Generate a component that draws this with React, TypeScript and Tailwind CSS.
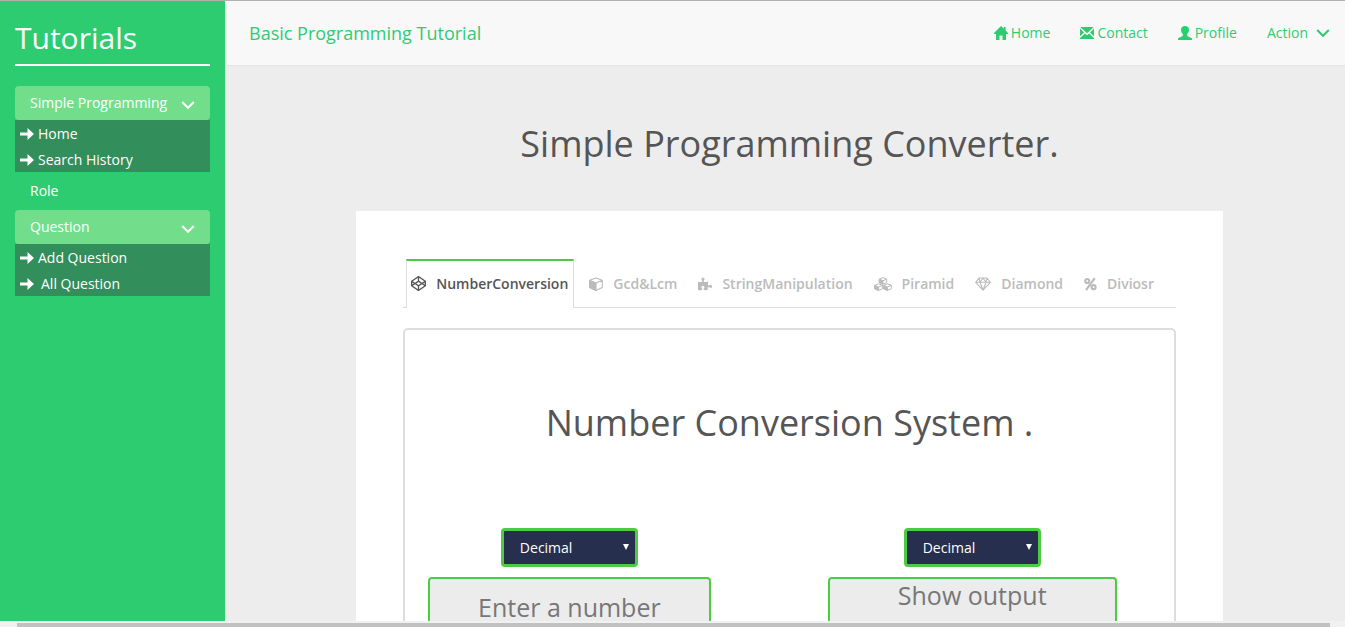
import type { ReactNode } from "react";
import { FaCodepen, FaPuzzlePiece } from "react-icons/fa";

type IconProps = { className?: string };

function HomeIcon({ className }: IconProps) {
  return (
    <svg viewBox="0 0 14 14" className={className} fill="currentColor" aria-hidden="true">
      <path d="M7 0 L9.8 2.8 V1 H11.6 V4.5 L14.2 7.2 V8 H12 V14 H8.5 V9.5 H5.5 V14 H2 V8 H-0.2 V7.2 Z" />
    </svg>
  );
}

function EnvelopeIcon({ className }: IconProps) {
  return (
    <svg viewBox="0 0 14 14" className={className} fill="currentColor" aria-hidden="true">
      <path d="M0.2 1 H13.8 L7 7.2 Z M0 2.6 L4 6.4 L0 10.2 Z M14 2.6 V10.2 L10 6.4 Z M5 7.4 L7 9.2 L9 7.4 L14 12 V13 H0 V12 Z" />
    </svg>
  );
}

function UserIcon({ className }: IconProps) {
  return (
    <svg viewBox="0 0 14 14" className={className} fill="currentColor" aria-hidden="true">
      <path d="M7 0 C9.5 0 11 1.4 11 3.8 C11 5.6 10.2 7 9.2 8 V9.4 C9.2 10 9.6 10.3 10.3 10.6 L13 11.7 C13.7 12 14 12.5 14 13.1 V14 H0 V13.1 C0 12.5 0.3 12 1 11.7 L3.7 10.6 C4.4 10.3 4.8 10 4.8 9.4 V8 C3.8 7 3 5.6 3 3.8 C3 1.4 4.5 0 7 0 Z" />
    </svg>
  );
}

function ChevronIcon({ className }: IconProps) {
  return (
    <svg viewBox="0 0 14 14" className={className} fill="none" stroke="currentColor" strokeWidth="2" aria-hidden="true">
      <path d="M1.2 4 L7 9.8 L12.8 4" />
    </svg>
  );
}

function ArrowIcon({ className }: IconProps) {
  return (
    <svg viewBox="0 0 14 14" className={className} fill="currentColor" aria-hidden="true">
      <path d="M7.5 1 L14 7 L7.5 13 V8.6 H0 V5.4 H7.5 Z" />
    </svg>
  );
}

function CubeIcon({ className }: IconProps) {
  return (
    <svg viewBox="0 0 14 14" className={className} stroke="currentColor" strokeWidth="1.1" strokeLinejoin="round" fill="none" aria-hidden="true">
      <path d="M7 0.9 L13.3 3.3 V10.4 L7 13.4 L0.7 10.4 V3.3 Z M7 6 L13.3 3.3" />
      <path fill="currentColor" d="M0.7 3.3 L7 6 V13.4 L0.7 10.4 Z" />
    </svg>
  );
}

function CubesIcon({ className }: IconProps) {
  return (
    <svg viewBox="0 0 18 14" className={className} stroke="currentColor" strokeWidth="1" strokeLinejoin="round" fill="none" aria-hidden="true">
      <path d="M9 0.6 L12.7 2.1 V5.6 L9 7.2 L5.3 5.6 V2.1 Z M9 3.8 L12.7 2.1" />
      <path fill="currentColor" d="M5.3 2.1 L9 3.8 V7.2 L5.3 5.6 Z" />
      <path d="M4.6 6.8 L8.4 8.3 V11.8 L4.6 13.4 L0.7 11.8 V8.3 Z M4.6 10 L8.4 8.3" />
      <path fill="currentColor" d="M0.7 8.3 L4.6 10 V13.4 L0.7 11.8 Z" />
      <path d="M13.4 6.8 L17.3 8.3 V11.8 L13.4 13.4 L9.6 11.8 V8.3 Z M13.4 10 L17.3 8.3" />
      <path fill="currentColor" d="M9.6 8.3 L13.4 10 V13.4 L9.6 11.8 Z" />
    </svg>
  );
}

function DiamondIcon({ className }: IconProps) {
  return (
    <svg viewBox="0 0 16 14" className={className} fill="none" stroke="currentColor" strokeWidth="1.1" strokeLinejoin="round" aria-hidden="true">
      <path d="M4 1 H12 L15.3 5.3 L8 13.2 L0.7 5.3 Z M0.7 5.3 H15.3 M5 5.3 L8 13.2 L11 5.3 M4 1 L5 5.3 L8 1 L11 5.3 L12 1" />
    </svg>
  );
}

function PercentIcon({ className }: IconProps) {
  return (
    <svg viewBox="0 0 13 14" className={className} fill="none" stroke="currentColor" strokeWidth="2.2" aria-hidden="true">
      <circle cx="3.2" cy="4" r="2" />
      <circle cx="9.6" cy="10.2" r="2" />
      <path d="M10.8 1.2 L2 13" />
    </svg>
  );
}

function MenuGroup({ title, children }: { title: string; children: ReactNode }) {
  return (
    <li>
      <button type="button" className="flex h-[34px] w-full items-center justify-between rounded bg-[#72de8c] pr-[15px] pl-[15px] text-left">
        {title}
        <ChevronIcon className="mt-1 size-[14px]" />
      </button>
      <ul className="bg-[#328e5a]">{children}</ul>
    </li>
  );
}

function MenuLink({ label, wide }: { label: string; wide?: boolean }) {
  return (
    <li>
      <a href="#" className={`flex h-[26px] items-center pt-[2px] pl-[5px] ${wide ? "gap-[7px]" : "gap-1"}`}>
        <ArrowIcon className="size-[14px]" />
        {label}
      </a>
    </li>
  );
}

function Sidebar() {
  return (
    <aside className="w-[225px] shrink-0 bg-[#2ecc71] px-[15px] pt-[18px] text-sm text-white">
      <h2 className="border-b-2 border-white pb-[7px] text-[30px] leading-[38px]">Tutorials</h2>
      <ul className="pt-5">
        <MenuGroup title="Simple Programming">
          <MenuLink label="Home" />
          <MenuLink label="Search History" />
        </MenuGroup>
        <li>
          <a href="#" className="flex h-[38px] items-center pl-[15px]">Role</a>
        </li>
        <MenuGroup title="Question">
          <MenuLink label="Add Question" />
          <MenuLink label="All Question" wide />
        </MenuGroup>
      </ul>
    </aside>
  );
}

function Navbar() {
  return (
    <header className="ml-[2px] flex h-[65px] items-center justify-between border-b border-[#e3e3e3] bg-[#f8f8f8] pr-[15px] pl-[22px] text-[#2ecc71]">
      <a href="#" className="text-lg">Basic Programming Tutorial</a>
      <nav className="flex gap-[30px] text-sm">
        <a href="#" className="flex items-center gap-[3px]"><HomeIcon className="size-[14px]" />Home</a>
        <a href="#" className="flex items-center gap-[3px]"><EnvelopeIcon className="size-[14px]" />Contact</a>
        <a href="#" className="flex items-center gap-[3px]"><UserIcon className="size-[14px]" />Profile</a>
        <button type="button" className="flex items-center gap-2">Action<ChevronIcon className="size-[14px]" /></button>
      </nav>
    </header>
  );
}

const tabs = [
  { label: "NumberConversion", icon: <FaCodepen className="size-[15px]" /> },
  { label: "Gcd&Lcm", icon: <CubeIcon className="size-[14px]" /> },
  { label: "StringManipulation", icon: <FaPuzzlePiece className="size-[14px]" /> },
  { label: "Piramid", icon: <CubesIcon className="h-[14px] w-[18px]" /> },
  { label: "Diamond", icon: <DiamondIcon className="h-[14px] w-4" /> },
  { label: "Diviosr", icon: <PercentIcon className="h-[14px] w-[13px]" /> },
];

function Tabs() {
  return (
    <div role="tablist" className="flex h-[49px] gap-px border-b border-[#dddddd] pl-[3px] text-sm font-semibold">
      {tabs.map((tab, i) => (
        <button
          key={tab.label}
          type="button"
          role="tab"
          aria-selected={i === 0}
          className={
            i === 0
              ? "mr-1 -mb-px flex items-center gap-[10px] border-x border-t-2 border-x-[#dddddd] border-t-[#4dcb44] bg-white pr-[5px] pb-[2px] pl-1 text-[#555555]"
              : "flex items-center gap-[10px] px-[10px] pt-[2px] text-[#bbbbbb]"
          }
        >
          {tab.icon}
          {tab.label}
        </button>
      ))}
    </div>
  );
}

function BaseSelect({ label }: { label: string }) {
  return (
    <div className="relative">
      <select
        aria-label={label}
        className="h-[39px] w-[137px] appearance-none rounded border-3 border-[#4dcb44] bg-[#272f4e] pl-4 text-sm text-white"
      >
        <option>Decimal</option>
        <option>Binary</option>
        <option>Octal</option>
        <option>Hexadecimal</option>
      </select>
      <svg viewBox="0 0 6 6" className="pointer-events-none absolute top-4 right-[9px] size-[6px]" fill="white" aria-hidden="true">
        <path d="M0 0 H6 L3 6 Z" />
      </svg>
    </div>
  );
}

const field =
  "block w-full resize-none rounded border-2 border-[#4dcb44] bg-[#ececec] text-center text-[25px] leading-8 placeholder:text-[#777777]";

export default function App() {
  return (
    <div className="flex h-screen flex-col overflow-hidden border-t border-[#b2b0b2] bg-[#ededed] font-['Open_Sans',sans-serif] text-[#555555]">
      <div className="flex min-h-0 flex-1 overflow-hidden">
        <Sidebar />
        <div className="min-w-0 flex-1">
          <Navbar />
          <main className="pl-[9px]">
            <h1 className="pt-[53px] pb-[42px] text-center text-4xl leading-[50px]">Simple Programming Converter.</h1>
            <div className="mx-auto w-[78%] bg-white px-[47px] pt-12 pb-12">
              <Tabs />
              <section className="mt-5 rounded-[5px] border-2 border-[#dddddd] pb-10">
                <h2 className="pt-[68px] pb-20 text-center text-4xl leading-[50px]">Number Conversion System .</h2>
                <div className="flex justify-between pr-[57px] pl-[23px]">
                  <div className="flex w-[41%] flex-col items-center gap-[10px]">
                    <BaseSelect label="Convert from" />
                    <input aria-label="Number" placeholder="Enter a number" className={`${field} h-[60px]`} />
                  </div>
                  <div className="flex w-[42%] flex-col items-center gap-[10px]">
                    <BaseSelect label="Convert to" />
                    <textarea aria-label="Output" readOnly placeholder="Show output" className={`${field} h-[60px]`} />
                  </div>
                </div>
              </section>
            </div>
          </main>
        </div>
      </div>
      <div className="h-[6px] shrink-0 bg-[#f1f1f1] pt-[2px] pr-[15px] pl-[17px]">
        <div className="h-1 bg-[#c1c1c1]" />
      </div>
    </div>
  );
}
